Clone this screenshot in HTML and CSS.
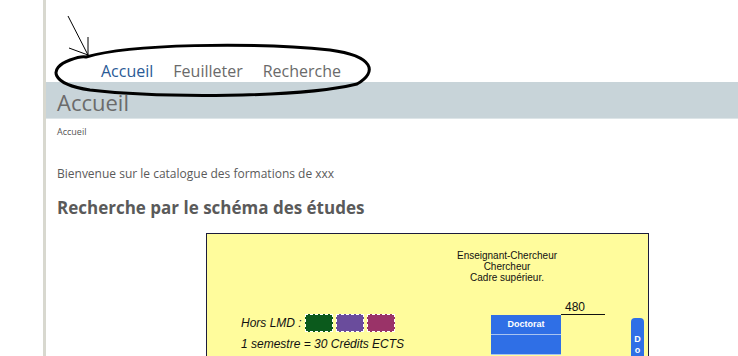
FILE: index.html
```html
<!DOCTYPE html>
<html lang="fr">
<head>
    <meta charset="UTF-8">
    <title>Accueil</title>
    <link rel="stylesheet" href="styles.css">
</head>
<body>
    <div class="page">
        <div class="header">
            <ul class="menu">
                <li><a href="#" class="active">Accueil</a></li>
                <li><a href="#">Feuilleter</a></li>
                <li><a href="#">Recherche</a></li>
            </ul>
        </div>

        <div class="title-bar">
            <h1>Accueil</h1>
        </div>

        <div class="content">
            <div class="breadcrumb">Accueil</div>
            <p class="intro">Bienvenue sur le catalogue des formations de xxx</p>
            <h2>Recherche par le schéma des études</h2>

            <div class="schema">
                <div class="careers">
                    Enseignant-Chercheur<br>
                    Chercheur<br>
                    Cadre supérieur.
                </div>
                <div class="schema-row">
                    <div class="legend">
                        <div class="legend-line">
                            <span>Hors LMD :</span>
                            <span class="swatch green"></span>
                            <span class="swatch purple"></span>
                            <span class="swatch pink"></span>
                        </div>
                        <div class="legend-line">1 semestre = 30 Crédits ECTS</div>
                    </div>
                    <div class="levels">
                        <div class="credits">480</div>
                        <div class="level">Doctorat</div>
                        <div class="level"></div>
                    </div>
                    <div class="side-tab">D<br>o</div>
                </div>
            </div>
        </div>
    </div>

    <!-- hand drawn annotation on top of the menu -->
    <svg class="annotation" width="400" height="110" viewBox="0 0 400 110">
        <path d="M68 16 L88 55 M88 37 L88 55 M69 48 L88 55" stroke="#000" stroke-width="1" fill="none"/>
        <path d="M86 57 C130 44 250 42 330 50 C374 56 378 72 357 84 C300 98 160 98 90 90 C50 84 48 68 70 60 C78 57 82 56 86 57 Z" stroke="#000" stroke-width="3" fill="none"/>
    </svg>
</body>
</html>
```

FILE: styles.css
```css
* {
    margin: 0;
    padding: 0;
    box-sizing: border-box;
}

body {
    font-family: "Open Sans", sans-serif;
    background-color: #fff;
    color: #555;
    overflow: hidden;
}

.page {
    margin-left: 43px;
    border-left: 3px solid #d8d8cf;
    min-height: 356px;
}

/* Menu */
.header {
    height: 82px;
    display: flex;
    align-items: flex-end;
    padding-left: 55px;
}

.menu {
    list-style: none;
    display: flex;
    gap: 20px;
}

.menu a {
    text-decoration: none;
    color: #6a6a6a;
    font-size: 16px;
}

.menu a.active {
    color: #2a5a96;
}

/* Title bar */
.title-bar {
    height: 37px;
    background-color: #c8d4d9;
    border-bottom: 1px solid #dde5e8;
    padding-left: 11px;
}

.title-bar h1 {
    font-size: 22px;
    font-weight: normal;
    color: #6b6b6b;
    line-height: 22px;
    padding-top: 9px;
}

/* Content */
.content {
    padding-left: 11px;
}

.breadcrumb {
    font-size: 9px;
    margin-top: 6px;
    color: #555;
}

.intro {
    font-size: 12px;
    margin-top: 27px;
    color: #5a5a5a;
}

h2 {
    font-size: 17px;
    margin-top: 14px;
    color: #5a5a5a;
}

/* Study scheme */
.schema {
    margin-left: 149px;
    margin-top: 14px;
    width: 443px;
    height: 140px;
    background-color: #fffc9c;
    border: 1px solid #1c1c3c;
    border-bottom: none;
    font-family: "Liberation Sans", Arial, sans-serif;
    color: #111;
}

.careers {
    font-size: 10px;
    line-height: 11px;
    text-align: center;
    margin-left: 235px;
    width: 130px;
    margin-top: 16px;
}

.schema-row {
    display: flex;
    margin-top: 17px;
}

.legend {
    margin-left: 34px;
    margin-top: 12px;
    width: 250px;
    font-style: italic;
    font-size: 12px;
}

.legend-line {
    display: flex;
    align-items: center;
    height: 21px;
}

.legend-line span:first-child {
    margin-right: 3px;
}

.swatch {
    width: 28px;
    height: 18px;
    border: 1px dashed #fff;
    margin-right: 3px;
}

.swatch.green {
    background-color: #0b5a1c;
}

.swatch.purple {
    background-color: #6a4c9c;
}

.swatch.pink {
    background-color: #9a3368;
}

.levels {
    width: 114px;
    display: flex;
    flex-direction: column;
    align-items: flex-start;
}

.credits {
    margin-left: 70px;
    width: 44px;
    font-size: 12px;
    padding-left: 4px;
    border-bottom: 1px solid #111;
    line-height: 14px;
}

.level {
    width: 70px;
    height: 20px;
    background-color: #2f6fe6;
    border-bottom: 1px solid #a9c4f0;
    color: #fff;
    font-size: 9px;
    font-weight: bold;
    text-align: center;
    line-height: 19px;
}

.side-tab {
    margin-left: 26px;
    margin-top: 18px;
    width: 13px;
    height: 60px;
    background-color: #2f6fe6;
    border-radius: 4px 4px 0 0;
    color: #fff;
    font-size: 9px;
    font-weight: bold;
    text-align: center;
    padding-top: 16px;
    line-height: 11px;
}

.annotation {
    position: absolute;
    left: 0;
    top: 0;
    pointer-events: none;
}
```
